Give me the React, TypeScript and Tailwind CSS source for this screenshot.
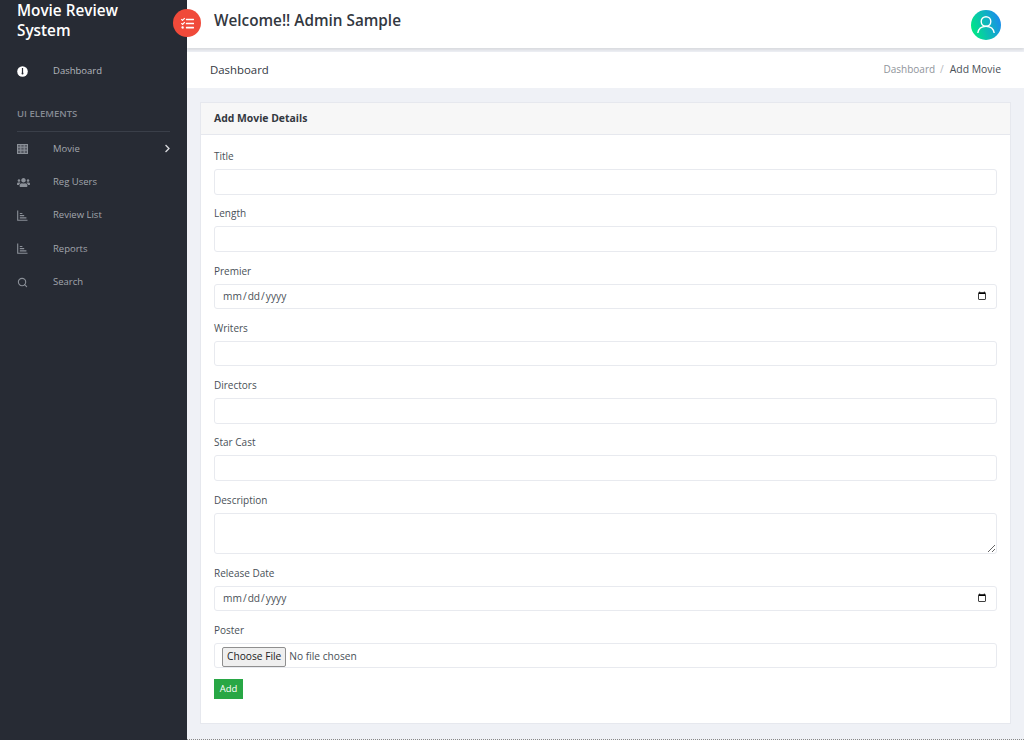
import React from "react";
import { FaChevronRight, FaUsers, FaTasks } from "react-icons/fa";
import { Search } from "lucide-react";

const font = "font-['Open_Sans','Noto_Sans',sans-serif]";

const ChartIcon = () => (
  <svg width="11" height="11" viewBox="0 0 11 11" fill="none" stroke="currentColor">
    <path d="M.7 .5v9.8h9.8" strokeWidth="1.1" />
    <path d="M2.8 3.5h2.6M2.8 5.7h4.4M2.8 7.9h6.6" strokeWidth="1.2" />
  </svg>
);

const TableIcon = () => (
  <svg width="11" height="10" viewBox="0 0 11 10" fill="none" stroke="currentColor" strokeWidth="1">
    <rect x=".5" y=".5" width="10" height="9" fill="currentColor" fillOpacity="0.45" />
    <path d="M.5 3.2h10M.5 6.2h10M3.8.5v9M7.2.5v9" />
  </svg>
);

const GaugeIcon = () => (
  <svg width="11" height="11" viewBox="0 0 11 11">
    <circle cx="5.5" cy="5.5" r="5.3" fill="#fff" />
    <rect x="4.9" y="2" width="1.2" height="5" fill="#272b34" />
    <circle cx="5.5" cy="7.6" r="1" fill="#272b34" />
  </svg>
);

const navItems = [
  { label: "Movie", icon: <TableIcon />, arrow: true },
  { label: "Reg Users", icon: <FaUsers size={13} /> },
  { label: "Review List", icon: <ChartIcon /> },
  { label: "Reports", icon: <ChartIcon /> },
  { label: "Search", icon: <Search size={11} strokeWidth={2.4} /> },
];

const inputClass =
  "block w-full h-[25.5px] rounded-[3px] border border-[#e8eaef] bg-white px-[7px] text-[10.2px] text-[#495057] outline-none";

const Field = ({ label, children }: { label: string; children: React.ReactNode }) => (
  <div className="mb-[11.8px]">
    <label className="mb-[6px] block h-[14px] text-[10px] leading-[14px] text-[#495057]">{label}</label>
    {children}
  </div>
);

export default function App() {
  return (
    <div className={`${font} relative flex h-[740px] w-[1024px] overflow-hidden bg-[#eff1f6]`}>
      {/* 사이드바 */}
      <aside className="flex w-[187px] shrink-0 flex-col bg-[#272b34] px-[17px]">
        <div className="mt-[1px] h-[40px] text-[15.3px] font-semibold leading-[19.5px] text-white">
          Movie Review System
        </div>
        <div className="mt-[21px] flex h-[18px] items-center text-[9.5px] text-[#b4b8bf]">
          <span className="w-[36px]">
            <GaugeIcon />
          </span>
          Dashboard
        </div>
        <div className="mt-[27px] h-[14px] text-[9.5px] font-semibold leading-[14px] text-[#858a93]">UI ELEMENTS</div>
        <div className="mt-[10px] border-t border-[#3a3f49]">
          {navItems.map((item) => (
            <div key={item.label} className="flex h-[33.4px] items-center text-[9.5px] text-[#a2a6ad]">
              <span className="flex w-[36px] items-center text-[#8b9098]">{item.icon}</span>
              <span className="flex-1">{item.label}</span>
              {item.arrow && <FaChevronRight size={9} className="-mr-[2px] text-[#d5d7db]" />}
            </div>
          ))}
        </div>
      </aside>

      {/* 메뉴 토글 버튼 */}
      <div className="absolute left-[173px] top-[9px] z-10 flex h-[28px] w-[28px] items-center justify-center rounded-full bg-[#f04a3a] text-white">
        <FaTasks size={13} />
      </div>

      <main className="flex min-w-0 flex-1 flex-col">
        <header className="flex h-[48px] items-start justify-between bg-white pl-[27px] pr-[23px] shadow-[0_2px_3px_rgba(0,0,0,0.1)]">
          <h1 className="mt-[9px] text-[15.3px] font-semibold leading-[22px] text-[#33383f]">Welcome!! Admin Sample</h1>
          <div className="mt-[10px] flex h-[30px] w-[30px] items-center justify-center rounded-full bg-[linear-gradient(70deg,#00e884_10%,#1a8cec_90%)]">
            <svg width="22" height="22" viewBox="0 0 22 22" fill="none" stroke="#fff" strokeWidth="1.4">
              <circle cx="11" cy="7.5" r="4.8" />
              <path d="M2.8 19c.6-4.2 3.8-6.6 8.2-6.6s7.6 2.4 8.2 6.6" />
            </svg>
          </div>
        </header>

        <div className="mt-[4px] flex h-[36px] items-center justify-between bg-white pl-[23px] pr-[23px]">
          <span className="text-[11.4px] font-medium text-[#33383f]">Dashboard</span>
          <span className="flex items-center text-[10px] text-[#8f949b]">
            Dashboard
            <span className="ml-[5px] mr-[6px] text-[#b5b8bd]">/</span>
            <span className="text-[10.4px] text-[#495057]">Add Movie</span>
          </span>
        </div>

        <section className="mx-[13px] mt-[14px] h-[622px] border border-[#e6e8ee] bg-white">
          <div className="flex h-[32px] items-center border-b border-[#e6e8ee] bg-[#f7f7f7] px-[13px] text-[10.4px] font-bold text-[#33383f]">
            Add Movie Details
          </div>
          <form className="px-[13px] pt-[14px]">
            <Field label="Title">
              <input className={inputClass} />
            </Field>
            <Field label="Length">
              <input className={inputClass} />
            </Field>
            <Field label="Premier">
              <input type="date" className={inputClass} />
            </Field>
            <Field label="Writers">
              <input className={inputClass} />
            </Field>
            <Field label="Directors">
              <input className={inputClass} />
            </Field>
            <Field label="Star Cast">
              <input className={inputClass} />
            </Field>
            <Field label="Description">
              <textarea className="block h-[41px] w-full rounded-[3px] border border-[#e8eaef] bg-white px-[7px] text-[10.2px] outline-none" />
            </Field>
            <Field label="Release Date">
              <input type="date" className={inputClass} />
            </Field>
            <div className="mb-[10.5px]">
              <label className="mb-[6px] block h-[14px] text-[10px] leading-[14px] text-[#495057]">Poster</label>
              <div className="flex h-[25.5px] items-center rounded-[3px] border border-[#e8eaef] px-[7px] pt-[2px]">
                <span className="flex h-[20px] items-center rounded-[2px] border border-[#8f8f8f] bg-[#efefef] px-[4px] text-[10.2px] text-[#222]">
                  Choose File
                </span>
                <span className="ml-[3px] text-[10.2px] text-[#495057]">No file chosen</span>
              </div>
            </div>
            <button type="button" className="flex h-[20px] w-[29px] items-center justify-center bg-[#28a745] text-[9.5px] text-white">
              Add
            </button>
          </form>
        </section>
        <div className="mt-auto border-b border-dotted border-[#888]" />
      </main>
    </div>
  );
}
